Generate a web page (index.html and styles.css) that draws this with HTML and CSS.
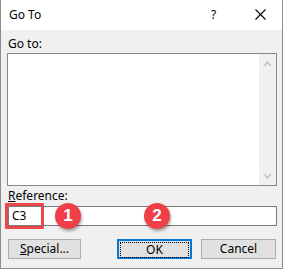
FILE: index.html
```html
<!DOCTYPE html>
<html>
<head>
<meta charset="utf-8">
<link rel="stylesheet" href="styles.css">
</head>
<body>
<div class="window">
  <div class="titlebar">
    <span class="title">Go To</span>
    <span class="help">?</span>
    <svg class="close" width="11" height="11" viewBox="0 0 11 11"><path d="M0.5 0.5 L10.5 10.5 M10.5 0.5 L0.5 10.5" stroke="#000" stroke-width="1.1" fill="none"/></svg>
  </div>
  <div class="content">
    <div class="label">Go to:</div>
    <div class="listbox">
      <div class="listarea"></div>
      <div class="scrollbar">
        <svg width="9" height="6" viewBox="0 0 9 6"><path d="M1 5 L4.5 1.5 L8 5" stroke="#c2c2c2" stroke-width="1.6" fill="none"/></svg>
        <svg width="9" height="6" viewBox="0 0 9 6"><path d="M1 1 L4.5 4.5 L8 1" stroke="#c2c2c2" stroke-width="1.6" fill="none"/></svg>
      </div>
    </div>
    <div class="label ref-label"><u>R</u>eference:</div>
    <div class="input-wrap">
      <div class="input">C3</div>
      <div class="highlight"></div>
      <div class="badge b1">1</div>
      <div class="badge b2">2</div>
    </div>
    <div class="buttons">
      <div class="btn special"><u>S</u>pecial...</div>
      <div class="btn ok"><span class="focus">OK</span></div>
      <div class="btn cancel">Cancel</div>
    </div>
  </div>
</div>
</body>
</html>
```
FILE: styles.css
```css
html, body { margin: 0; padding: 0; }
body {
  font-family: "Segoe UI", "Noto Sans", "Open Sans", sans-serif;
  font-size: 12px;
  color: #000;
  background: #fff;
}
.window {
  width: 283px;
  height: 269px;
  box-sizing: border-box;
  border: 1px solid #8c8c8c;
  border-top: none;
  background: #f0f0f0;
  display: flex;
  flex-direction: column;
}
.titlebar {
  height: 30px;
  background: #fff;
  display: flex;
  align-items: center;
  padding-left: 8px;
  flex-shrink: 0;
}
.title { font-size: 12px; flex: 1; margin-top: -1px; }
.help { width: 14px; margin-right: 30px; font-size: 12px; margin-top: -1px; }
.close { margin-right: 16px; margin-top: -1px; }
.content {
  padding: 6px 5px 0 6px;
  display: flex;
  flex-direction: column;
}
.label { height: 17px; line-height: 16px; padding-left: 1px; }
.listbox {
  height: 133px;
  box-sizing: border-box;
  border: 1px solid #828790;
  background: #fff;
  display: flex;
}
.listarea { flex: 1; }
.scrollbar {
  width: 17px;
  background: #f0f0f0;
  display: flex;
  flex-direction: column;
  justify-content: space-between;
  align-items: center;
  padding: 7px 0 6px;
}
.ref-label { margin-top: 2px; height: 18px; }
.input-wrap { position: relative; height: 20px; margin-left: 1px; }
.input {
  height: 20px;
  box-sizing: border-box;
  border: 1px solid #7a7a7a;
  background: #fff;
  padding-left: 3px;
  line-height: 17px;
}
.highlight {
  position: absolute;
  left: -3px; top: -3px;
  width: 39px; height: 26px;
  box-sizing: border-box;
  border: 3px solid #e8474b;
  border-radius: 1px;
}
.badge {
  position: absolute;
  width: 26px; height: 26px;
  border-radius: 50%;
  background: #ef4048;
  color: #fff;
  font-family: "Liberation Sans", Arial, sans-serif;
  font-weight: 700;
  font-size: 17px;
  line-height: 26px;
  text-align: center;
  box-shadow: 1px 2px 3px rgba(0,0,0,0.35);
}
.b1 { left: 47px; top: -3px; }
.b2 { left: 136px; top: -3px; }
.buttons {
  margin-top: 13px;
  display: flex;
  padding-left: 1px;
}
.btn {
  height: 20px;
  box-sizing: border-box;
  border: 1px solid #adadad;
  background: #e1e1e1;
  text-align: center;
  line-height: 18px;
}
.special { width: 73px; }
.ok {
  width: 75px;
  margin-left: 36px;
  border: 2px solid #0078d7;
  padding: 1px;
  line-height: 14px;
}
.focus {
  display: block;
  height: 14px;
  border: 1px dotted #000;
}
.cancel { width: 75px; margin-left: 9px; }
```
